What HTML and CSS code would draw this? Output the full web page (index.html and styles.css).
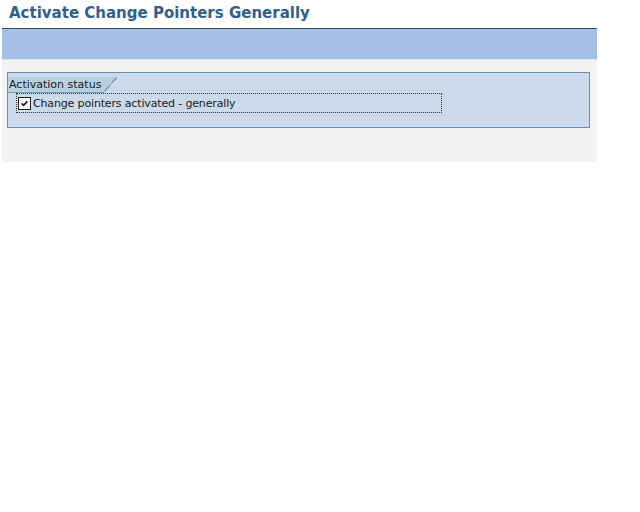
FILE: index.html
```html
<!DOCTYPE html>
<html>
<head>
<meta charset="utf-8">
<link rel="stylesheet" href="styles.css">
</head>
<body>
<div class="screen">
  <div class="title-bar"><h1 class="title">Activate Change Pointers Generally</h1></div>
  <div class="toolbar"></div>
  <div class="content">
    <div class="group">
      <div class="group-head"><span class="tab">Activation status</span></div>
      <div class="group-body">
        <label class="check-row">
          <span class="checkbox"><svg width="11" height="11" viewBox="0 0 11 11"><path d="M2.5 5.3 L4.6 7.4 L8.4 3.4" fill="none" stroke="#222" stroke-width="1.7"/></svg></span>
          <span class="check-label">Change pointers activated - generally</span>
        </label>
      </div>
    </div>
  </div>
</div>
</body>
</html>
```
FILE: styles.css
```css
html, body { margin: 0; padding: 0; background: #fff; }
.screen { margin-left: 2px; width: 595px; font-family: "DejaVu Sans", Verdana, sans-serif; }
.title-bar { height: 28px; border-bottom: 1px solid #2b4e70; }
.title { margin: 0; padding: 4px 0 0 7px; font-size: 15px; line-height: 19px; font-weight: bold; color: #2f5f8e; }
.toolbar { height: 30px; background: #a4c1e5; border-bottom: 1px solid #dce8f5; }
.content { background: #f2f2f2; height: 102px; padding: 12px 0 0 5px; box-sizing: border-box; }
.group { width: 583px; height: 56px; box-sizing: border-box; border: 1px solid #6f8cab; background: #cbdbeb; }
.group-head { height: 16px; }
.tab { display: inline-block; position: relative; height: 15px; line-height: 15px; padding: 0 2px 0 1px; font-size: 11px; color: #1a1a1a;
  background: #b8d1df; border-bottom: 1px solid #7f9db6; }
.tab::after { content: ""; position: absolute; top: 0; right: -14px; width: 14px; height: 16px;
  background: linear-gradient(to top left, transparent calc(50% - 0.7px), #7f9db6 calc(50% - 0.7px), #7f9db6 calc(50% + 0.5px), #b8d1df calc(50% + 0.5px)); }
.group-body { padding: 4px 0 0 8px; }
.check-row { display: flex; align-items: center; width: 426px; height: 20px; border: 1px dotted #333; box-sizing: border-box; padding-left: 1px; }
.checkbox { width: 11px; height: 11px; border: 1px solid #222; background: #fff; display: flex; }
.check-label { margin-left: 2px; font-size: 11px; letter-spacing: -0.15px; color: #1a1a1a; }
```
